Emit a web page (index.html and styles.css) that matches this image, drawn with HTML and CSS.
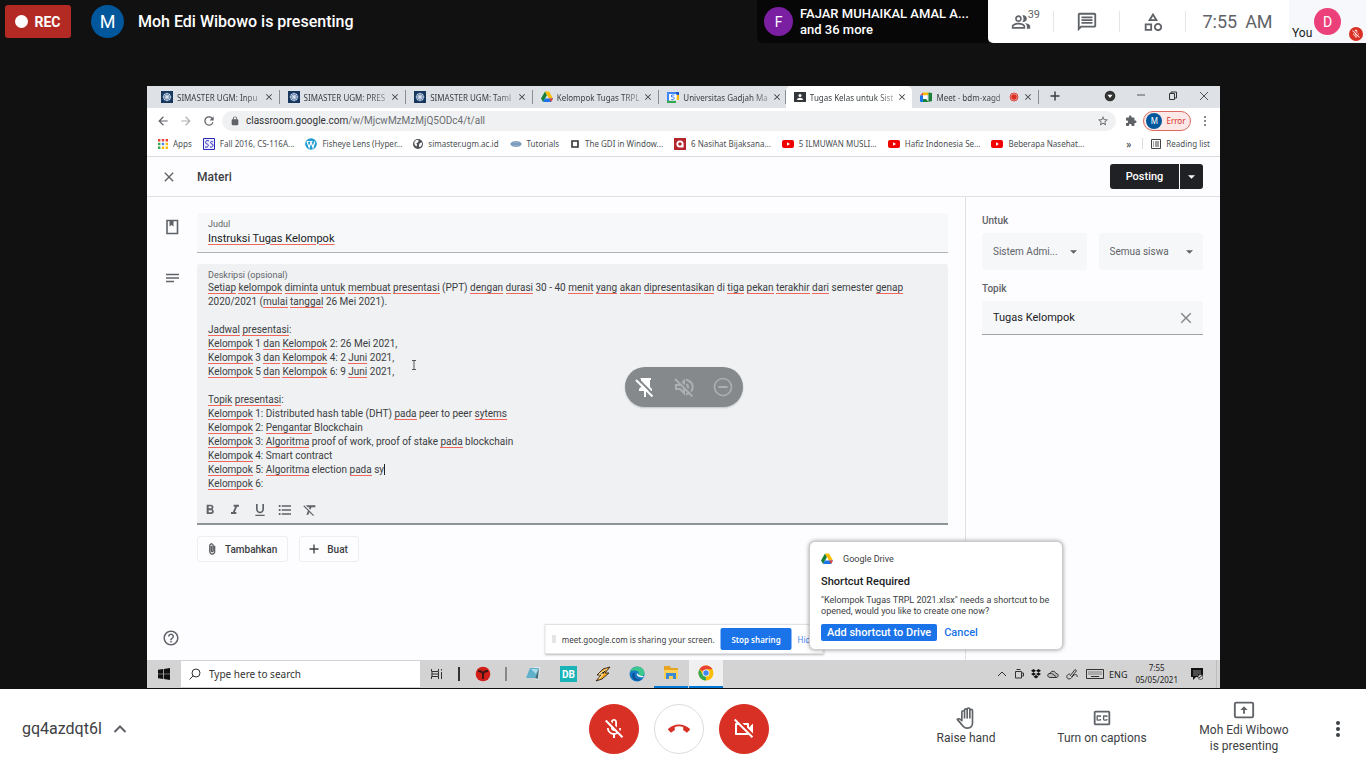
FILE: index.html
```html
<!DOCTYPE html>
<html lang="en">
<head>
<meta charset="utf-8">
<meta name="viewport" content="width=device-width, initial-scale=1">
<title>Meet</title>
<link rel="stylesheet" href="styles.css">
</head>
<body>
<svg class="sprite" aria-hidden="true">
  <symbol id="close" viewBox="0 0 24 24"><path d="M19 6.41L17.59 5 12 10.59 6.41 5 5 6.41 10.59 12 5 17.59 6.41 19 12 13.41 17.59 19 19 17.59 13.41 12z"/></symbol>
  <symbol id="micoff" viewBox="0 0 24 24"><path d="M10.8 4.9c0-.66.54-1.2 1.2-1.2s1.2.54 1.2 1.2l-.01 3.91L15 10.6V5c0-1.66-1.34-3-3-3-1.54 0-2.79 1.16-2.96 2.65l1.76 1.76V4.9zM19 11h-1.7c0 .58-.1 1.13-.27 1.64l1.27 1.27c.44-.88.7-1.87.7-2.91zM4.41 2.86L3 4.27l6 6V11c0 1.66 1.34 3 3 3 .23 0 .44-.03.65-.08l1.66 1.66c-.71.33-1.5.52-2.31.52-2.76 0-5.3-2.1-5.3-5.1H5c0 3.41 2.72 6.23 6 6.72V21h2v-3.28c.91-.13 1.77-.45 2.55-.9l4.2 4.2 1.41-1.41L4.41 2.86z"/></symbol>
  <symbol id="drive" viewBox="0 0 24 22"><path fill="#188038" d="M8 0 0 14l4 7L12 7z"/><path fill="#fbbc04" d="M8 0h8l8 14h-8z"/><path fill="#1a73e8" d="M4 21h16l4-7H8z"/><path fill="#ea4335" d="m20 21 4-7h-8z"/></symbol>
  <symbol id="ugm" viewBox="0 0 12 12"><path fill="#17375e" d="M0 0h12v12H0z"/><circle cx="6" cy="6" r="4" fill="#8fa8c8"/><circle cx="6" cy="6" r="2.6" fill="none" stroke="#34547f" stroke-width=".7"/><path stroke="#e4ebf4" stroke-width=".7" d="M6 1.6v8.8M1.6 6h8.8M3 3l6 6M9 3 3 9"/></symbol>
  <symbol id="tube" viewBox="0 0 12 10"><rect y="1" width="12" height="8" rx="2" fill="#f00000"/><path fill="#fff" d="m5 3.2 3 1.8-3 1.8z"/></symbol>
  <symbol id="caret" viewBox="0 0 8 4"><path d="M0 0h8L4 4z"/></symbol>
</svg>

<header class="topbar">
  <div class="rec"><i class="rec-dot"></i>REC</div>
  <span class="avatar avatar-m">M</span>
  <h1 class="presenter">Moh Edi Wibowo is presenting</h1>
  <div class="speaker">
    <span class="avatar avatar-f">F</span>
    <p>FAJAR MUHAIKAL AMAL A...<br>and 36 more</p>
  </div>
  <div class="meeting-tools">
    <button class="tool" aria-label="People"><svg class="i20" viewBox="0 0 24 24"><path d="M16.67 13.13C18.04 14.06 19 15.32 19 17v3h4v-3c0-2.18-3.57-3.47-6.33-3.87zM15 12c2.21 0 4-1.79 4-4s-1.79-4-4-4c-.47 0-.91.1-1.33.24C14.5 5.27 15 6.58 15 8s-.5 2.73-1.33 3.76c.42.14.86.24 1.33.24zM9 12c2.21 0 4-1.79 4-4s-1.79-4-4-4-4 1.79-4 4 1.79 4 4 4zm0-6c1.1 0 2 .9 2 2s-.9 2-2 2-2-.9-2-2 .9-2 2-2zm0 7c-2.67 0-8 1.34-8 4v3h16v-3c0-2.66-5.33-4-8-4zm6 5H3v-.99C3.2 16.29 6.3 15 9 15s5.8 1.29 6 2v1z"/></svg><span class="count">39</span></button>
    <button class="tool" aria-label="Chat"><svg class="i22" viewBox="0 0 24 24"><path d="M4 4h16v12H5.17L4 17.17V4m0-2c-1.1 0-1.99.9-1.99 2L2 22l4-4h14c1.1 0 2-.9 2-2V4c0-1.1-.9-2-2-2H4zm2 10h12v2H6v-2zm0-3h12v2H6V9zm0-3h12v2H6V6z"/></svg></button>
    <button class="tool" aria-label="Activities"><svg class="i22" viewBox="0 0 24 24"><path d="M12 2l-5.5 9h11L12 2zm0 3.84L13.93 9h-3.87L12 5.84zM17.5 13c-2.49 0-4.5 2.01-4.5 4.5s2.01 4.5 4.5 4.5 4.5-2.01 4.5-4.5-2.01-4.5-4.5-4.5zm0 7c-1.38 0-2.5-1.12-2.5-2.5s1.12-2.5 2.5-2.5 2.5 1.12 2.5 2.5-1.12 2.5-2.5 2.5zM3 21.5h8v-8H3v8zm2-6h4v4H5v-4z"/></svg></button>
    <div class="clock"><span>7:55</span><span>AM</span></div>
    <div class="you"><span class="you-label">You</span><span class="avatar avatar-d">D</span><span class="muted"><svg viewBox="0 0 24 24"><use href="#micoff"/></svg></span></div>
  </div>
</header>

<main class="stage">
  <section class="screen" aria-label="Shared screen">
    <div class="tabstrip">
      <div class="tabs">
        <div class="tab"><svg class="i12"><use href="#ugm"/></svg><span>SIMASTER UGM: Inpu</span><button aria-label="Close tab"><svg class="i10"><use href="#close"/></svg></button></div>
        <div class="tab"><svg class="i12"><use href="#ugm"/></svg><span>SIMASTER UGM: PRES</span><button aria-label="Close tab"><svg class="i10"><use href="#close"/></svg></button></div>
        <div class="tab"><svg class="i12"><use href="#ugm"/></svg><span>SIMASTER UGM: Taml</span><button aria-label="Close tab"><svg class="i10"><use href="#close"/></svg></button></div>
        <div class="tab"><svg class="i12"><use href="#drive"/></svg><span>Kelompok Tugas TRPL</span><button aria-label="Close tab"><svg class="i10"><use href="#close"/></svg></button></div>
        <div class="tab"><svg class="i12" viewBox="0 0 12 12"><path fill="#4285f4" d="M0 1h9v2H2v7H0z"/><path fill="#1a56c4" d="M9 1h3v3H9z"/><path fill="#fbbc04" d="M9.500 4H12v5H9.500z"/><path fill="#34a853" d="M0 9.500h9V12H0z"/><path fill="#fff" d="M2 3h7.500v6.500H2z"/><path fill="none" stroke="#4285f4" d="M7.500 4h-3v2h1.800c1.600.200 1.400 2.500-.100 2.500H4.200"/></svg><span>Universitas Gadjah Ma</span><button aria-label="Close tab"><svg class="i10"><use href="#close"/></svg></button></div>
        <div class="tab active"><svg class="i12" viewBox="0 0 12 12"><path fill="#33373b" d="M0 1h12v10H0z"/><circle cx="6" cy="4.500" r="1.500" fill="#fff"/><path fill="#fff" d="M3 9c0-3 6-3 6 0z"/></svg><span>Tugas Kelas untuk Sist</span><button aria-label="Close tab"><svg class="i10"><use href="#close"/></svg></button></div>
        <div class="tab"><svg class="i12" viewBox="0 0 12 12"><path fill="#ea4335" d="M0 4.500 3 1.500v3z"/><path fill="#fbbc04" d="M3 1.500h5.500V4L3 4.500z"/><path fill="#1a73e8" d="M0 4.500h3V11H1a1 1 0 0 1-1-1z"/><path fill="#188038" d="M3 8h3l2.500 3H3zM8.500 1.500v9.500l3.500-1V2z"/><path fill="#fff" d="M3 4.500h4V8H3z"/></svg><span>Meet - bdm-xagd</span><svg class="i10" viewBox="0 0 10 10"><circle cx="5" cy="5" r="4" fill="#e8b4ae" stroke="#dd4b3e"/><circle cx="5" cy="5" r="2.800" fill="#d93025"/></svg><button aria-label="Close tab"><svg class="i10"><use href="#close"/></svg></button></div>
      </div>
      <div class="window-tools">
        <svg class="i12 plus" viewBox="0 0 12 12"><path d="M6 1.500v9M1.500 6h9" fill="none" stroke="#3c4043" stroke-width="1.500"/></svg>
        <svg class="i12" viewBox="0 0 12 12"><circle cx="6" cy="6" r="5.300"/><path fill="#fff" d="M3.500 4.700h5L6 8z"/></svg>
        <svg class="i12" viewBox="0 0 12 12"><path d="M2 5h8" fill="none" stroke="#555"/></svg>
        <svg class="i12" viewBox="0 0 12 12"><path d="M2.500 3.500h5v6h-5zM4 3.500V2h5.500v6h-2" fill="none" stroke="#333"/></svg>
        <svg class="i12" viewBox="0 0 12 12"><path d="m2 2 8 8M10 2l-8 8" fill="none" stroke="#555"/></svg>
      </div>
    </div>

    <div class="addressbar">
      <button aria-label="Back"><svg class="i14" viewBox="0 0 24 24"><path d="M20 11H7.830l5.590-5.590L12 4l-8 8 8 8 1.410-1.410L7.830 13H20v-2z"/></svg></button>
      <button aria-label="Forward" class="faint"><svg class="i14" viewBox="0 0 24 24"><path d="M4 11h12.170l-5.590-5.590L12 4l8 8-8 8-1.410-1.410L16.170 13H4z"/></svg></button>
      <button aria-label="Reload"><svg class="i14" viewBox="0 0 24 24"><path d="M17.65 6.35C16.2 4.9 14.21 4 12 4c-4.42 0-7.99 3.58-7.99 8s3.57 8 7.99 8c3.73 0 6.84-2.55 7.73-6h-2.080c-.82 2.33-3.040 4-5.650 4-3.310 0-6-2.690-6-6s2.690-6 6-6c1.660 0 3.140.690 4.220 1.780L13 11h7V4l-2.350 2.350z"/></svg></button>
      <div class="url"><svg class="i10" viewBox="0 0 24 24"><path d="M18 8h-1V6c0-2.760-2.240-5-5-5S7 3.240 7 6v2H6c-1.100 0-2 .9-2 2v10c0 1.100.9 2 2 2h12c1.100 0 2-.9 2-2V10c0-1.100-.9-2-2-2zM9 6c0-1.660 1.340-3 3-3s3 1.340 3 3v2H9z"/></svg><span><b>classroom.google.com</b>/w/MjcwMzMzMjQ5ODc4/t/all</span>
        <svg class="i12 star" viewBox="0 0 24 24"><path d="M22 9.240l-7.190-.620L12 2 9.190 8.630 2 9.240l5.460 4.730L5.820 21 12 17.270 18.180 21l-1.630-7.030L22 9.240zM12 15.400l-3.760 2.270 1-4.280-3.320-2.880 4.380-.380L12 6.100l1.710 4.040 4.380.380-3.320 2.880 1 4.280L12 15.400z"/></svg></div>
      <svg class="i12" viewBox="0 0 24 24"><path d="M20.500 11H19V7c0-1.100-.9-2-2-2h-4V3.500C13 2.120 11.880 1 10.500 1S8 2.120 8 3.500V5H4c-1.100 0-1.990.9-1.990 2v3.800H3.500c1.490 0 2.700 1.210 2.700 2.700s-1.210 2.700-2.700 2.700H2V20c0 1.100.9 2 2 2h3.800v-1.500c0-1.490 1.210-2.700 2.700-2.700 1.490 0 2.700 1.210 2.700 2.700V22H17c1.100 0 2-.9 2-2v-4h1.500c1.380 0 2.500-1.120 2.500-2.500S21.880 11 20.500 11z"/></svg>
      <button class="profile"><span class="avatar avatar-s">M</span>Error</button>
      <svg class="i12" viewBox="0 0 12 12"><circle cx="6" cy="2" r="1"/><circle cx="6" cy="6" r="1"/><circle cx="6" cy="10" r="1"/></svg>
    </div>

    <nav class="bookmarks">
      <a href="#"><svg class="i10" viewBox="0 0 10 10"><path fill="#ea4335" d="M0 0h2.400v2.400H0zM3.800 0h2.400v2.400H3.800zM7.600 0H10v2.400H7.600z"/><path fill="#34a853" d="M0 3.800h2.400v2.400H0zM0 7.600h2.400V10H0z"/><path fill="#4285f4" d="M3.800 3.800h2.400v2.400H3.800z"/><path fill="#fbbc04" d="M7.600 3.800H10v2.400H7.600zM3.800 7.600h2.400V10H3.800zM7.600 7.600H10V10H7.600z"/></svg>Apps</a>
      <a href="#"><svg class="i12" viewBox="0 0 12 12"><path fill="#eef" stroke="#2a2ab8" d="M.5.5h11v11H.5z"/><path fill="none" stroke="#2a2ab8" d="M6 3C2 1 2 6 4 6s2 4-2 3M10 4c-3-2-3 2-1 2s1 4-2 3"/></svg>Fall 2016, CS-116A...</a>
      <a href="#"><svg class="i12" viewBox="0 0 12 12"><circle cx="6" cy="6" r="5.800" fill="#1e9bd4"/><path fill="none" stroke="#fff" stroke-width="1.200" d="m2 3.500 2.200 6L6 4l2 5.500 1.800-6M1.800 3.500h2.800M5 3.500h2.500"/></svg>Fisheye Lens (Hyper...</a>
      <a href="#"><svg class="i10" viewBox="0 0 12 12"><circle cx="6" cy="6" r="6" fill="#4d5156"/><path fill="#fff" d="M2 3c2-2 4-2 5-1L6 4 4 5l1 2-1 2C2 8 1 5 2 3zM8 5l3-1c0 3-1 5-3 6L7 8z"/></svg>simaster.ugm.ac.id</a>
      <a href="#"><svg class="i12" viewBox="0 0 12 12"><ellipse cx="6" cy="6" rx="5" ry="2.200" fill="#b9cbdc" stroke="#5580a8"/><path d="M2 6h8" stroke="#3c6e9f"/></svg>Tutorials</a>
      <a href="#"><svg class="i10" viewBox="0 0 10 10"><path fill="none" stroke="#333" stroke-width="1.600" d="M2 2h6v6H2z"/></svg>The GDI in Window...</a>
      <a href="#"><svg class="i12" viewBox="0 0 12 12"><path fill="#b3262d" d="M0 0h12v12H0z"/><circle cx="6" cy="6" r="2.700" fill="none" stroke="#fff" stroke-width="1.800"/><path fill="#fff" d="M7 7h2.500v2.500H7z"/></svg>6 Nasihat Bijaksana...</a>
      <a href="#"><svg class="i12"><use href="#tube"/></svg>5 ILMUWAN MUSLI...</a>
      <a href="#"><svg class="i12"><use href="#tube"/></svg>Hafiz Indonesia Se...</a>
      <a href="#"><svg class="i12"><use href="#tube"/></svg>Beberapa Nasehat...</a>
      <span class="more">»</span>
      <a href="#" class="reading"><svg class="i10" viewBox="0 0 10 10"><path fill="none" stroke="#444" d="M.5.5h9v9h-9zM2 3h1M4 3h4M2 5h1M4 5h4M2 7h1M4 7h4"/></svg>Reading list</a>
    </nav>

    <div class="class-head">
      <button aria-label="Close"><svg class="i16"><use href="#close"/></svg></button>
      <h2>Materi</h2>
      <div class="split"><button>Posting</button><button aria-label="More options"><svg class="caret-s"><use href="#caret"/></svg></button></div>
    </div>

    <div class="class-body">
      <div class="editor">
        <svg class="i18 side-icon" viewBox="0 0 18 18"><path fill="none" stroke="#5f6368" stroke-width="1.600" d="M4 2.500h10.500v13H4z"/><path d="M6.500 2.500h4v6l-2-1.500-2 1.500z"/></svg>
        <div class="field title-field">
          <label for="judul">Judul</label>
          <input id="judul" type="text" value="Instruksi Tugas Kelompok">
        </div>
        <svg class="i18 side-icon" viewBox="0 0 18 18"><path fill="none" stroke="#5f6368" stroke-width="1.400" d="M3 5.500h13M3 9h13M3 12.500h8"/></svg>
        <div class="field desc-field">
          <span class="field-label" id="desk">Deskripsi (opsional)</span>
          <div class="rich" contenteditable="true" spellcheck="false" role="textbox" aria-multiline="true" aria-labelledby="desk"><u>Setiap</u> <u>kelompok</u> <u>diminta</u> <u>untuk</u> <u>membuat</u> <u>presentasi</u> (PPT) <u>dengan</u> <u>durasi</u> 30 - 40 <u>menit</u> <u>yang</u> <u>akan</u> <u>dipresentasikan</u> di <u>tiga</u> <u>pekan</u> <u>terakhir</u> <u>dari</u> semester <u>genap</u><br>2020/2021 (<u>mulai</u> <u>tanggal</u> 26 Mei 2021).<br><br><u>Jadwal</u> <u>presentasi</u>:<br><u>Kelompok</u> 1 <u>dan</u> <u>Kelompok</u> 2: 26 Mei 2021,<br><u>Kelompok</u> 3 <u>dan</u> <u>Kelompok</u> 4: 2 <u>Juni</u> 2021,<br><u>Kelompok</u> 5 <u>dan</u> <u>Kelompok</u> 6: 9 <u>Juni</u> 2021,<br><br><u>Topik</u> <u>presentasi</u>:<br><u>Kelompok</u> 1: Distributed hash table (DHT) <u>pada</u> peer to peer <u>sytems</u><br><u>Kelompok</u> 2: <u>Pengantar</u> Blockchain<br><u>Kelompok</u> 3: <u>Algoritma</u> proof of work, proof of stake <u>pada</u> blockchain<br><u>Kelompok</u> 4: Smart contract<br><u>Kelompok</u> 5: <u>Algoritma</u> election <u>pada</u> <span class="typing">sy</span><br><u>Kelompok</u> 6:</div>
          <div class="format">
            <button aria-label="Bold"><svg class="i16" viewBox="0 0 24 24"><path d="M15.600 10.790c.970-.670 1.650-1.770 1.650-2.790 0-2.260-1.750-4-4-4H7v14h7.040c2.090 0 3.710-1.700 3.710-3.790 0-1.520-.860-2.820-2.150-3.420zM10 6.500h3c.830 0 1.500.670 1.500 1.500s-.670 1.500-1.500 1.500h-3v-3zm3.500 9H10v-3h3.500c.830 0 1.500.670 1.500 1.500s-.670 1.500-1.500 1.500z"/></svg></button>
            <button aria-label="Italic"><svg class="i16" viewBox="0 0 24 24"><path d="M10 4v3h2.210l-3.420 8H6v3h8v-3h-2.210l3.420-8H18V4z"/></svg></button>
            <button aria-label="Underline"><svg class="i16" viewBox="0 0 24 24"><path d="M12 17c3.310 0 6-2.690 6-6V3h-2.500v8c0 1.930-1.570 3.500-3.500 3.500S8.500 12.930 8.500 11V3H6v8c0 3.310 2.690 6 6 6zm-7 2v2h14v-2H5z"/></svg></button>
            <button aria-label="Bulleted list"><svg class="i16" viewBox="0 0 24 24"><path d="M4 10.500c-.830 0-1.500.670-1.500 1.500s.670 1.500 1.500 1.500 1.500-.670 1.500-1.500-.670-1.500-1.500-1.500zm0-6c-.830 0-1.500.670-1.500 1.500S3.170 7.500 4 7.500 5.500 6.830 5.500 6 4.830 4.500 4 4.500zm0 12c-.830 0-1.500.680-1.500 1.500s.680 1.500 1.500 1.500 1.500-.680 1.500-1.500-.670-1.500-1.500-1.500zM7 19h14v-2H7v2zm0-6h14v-2H7v2zm0-8v2h14V5H7z"/></svg></button>
            <button aria-label="Remove formatting"><svg class="i16" viewBox="0 0 24 24"><path d="M3.270 5L2 6.270l6.970 6.970L6.500 19h3l1.570-3.660L16.730 21 18 19.730 3.550 5.270 3.270 5zM6 5v.180L8.820 8h2.400l-.720 1.680 2.100 2.100L14.210 8H20V5H6z"/></svg></button>
          </div>
          <svg class="ibeam" viewBox="0 0 6 10"><path fill="none" stroke="#555" d="M1 .5h4M1 9.500h4M3 1v8"/></svg>
        </div>
        <div class="attach">
          <button><svg class="i12" viewBox="0 0 24 24"><path d="M16.500 6v11.500c0 2.210-1.790 4-4 4s-4-1.790-4-4V5c0-1.380 1.120-2.500 2.500-2.500s2.500 1.120 2.500 2.500v10.500c0 .550-.450 1-1 1s-1-.450-1-1V6H10v9.500c0 1.380 1.120 2.500 2.500 2.500s2.500-1.120 2.500-2.500V5c0-2.210-1.790-4-4-4S7 2.790 7 5v12.500c0 3.040 2.460 5.500 5.500 5.500s5.500-2.460 5.500-5.500V6h-1.500z" stroke="#3c4043"/></svg>Tambahkan</button>
          <button><svg class="i12" viewBox="0 0 12 12"><path d="M6 1.500v9M1.500 6h9" stroke="#3c4043" stroke-width="1.300"/></svg>Buat</button>
        </div>
        <button class="help" aria-label="Help"><svg class="i18" viewBox="0 0 24 24"><path d="M11 18h2v-2h-2v2zm1-16C6.480 2 2 6.480 2 12s4.480 10 10 10 10-4.480 10-10S17.520 2 12 2zm0 18c-4.410 0-8-3.590-8-8s3.590-8 8-8 8 3.590 8 8-3.590 8-8 8zm0-14c-2.210 0-4 1.790-4 4h2c0-1.100.9-2 2-2s2 .9 2 2c0 2-3 1.750-3 5h2c0-2.250 3-2.500 3-5 0-2.210-1.790-4-4-4z"/></svg></button>
      </div>
      <aside class="side">
        <label for="kelas">Untuk</label>
        <div class="selects">
          <div class="select"><select id="kelas"><option>Sistem Admi...</option></select><svg><use href="#caret"/></svg></div>
          <div class="select"><select aria-label="Siswa"><option>Semua siswa</option></select><svg><use href="#caret"/></svg></div>
        </div>
        <label for="topik">Topik</label>
        <div class="topic"><input id="topik" type="text" value="Tugas Kelompok"><button aria-label="Clear topic"><svg class="i18"><use href="#close"/></svg></button></div>
      </aside>
    </div>

    <footer class="taskbar">
      <button class="start" aria-label="Start"><svg class="i12" viewBox="0 0 12 12"><path d="M0 1.700 5.200 1v4.700H0zM5.900.9 12 0v5.700H5.900zM0 6.300h5.200V11L0 10.300zM5.900 6.300H12V12l-6.100-.9z"/></svg></button>
      <label class="search"><svg class="i12" viewBox="0 0 12 12"><circle cx="7" cy="5" r="4" fill="none" stroke="#333"/><path stroke="#333" d="M4.200 7.800.5 11.500"/></svg><input type="text" placeholder="Type here to search" aria-label="Search"></label>
      <div class="apps">
        <span><svg class="i12" viewBox="0 0 12 12"><path fill="none" stroke="#333" d="M.5 1v2.500h7V1M1 4v4.500M7.500 4v4.500M.5 11V8.500h7V11M.5 6h7M10.500 4v7M10.500 1v1.500"/></svg></span>
        <i class="bar"></i>
        <span><svg class="i16" viewBox="0 0 16 16"><circle cx="8" cy="8" r="7.300" fill="#d21e19"/><path fill="none" stroke="#3e1514" stroke-width="2" d="M3 5q5 0 5 3.500V13M13 5q-5 0-5 3.500"/></svg></span>
        <i class="bar soft"></i>
        <span><svg class="i16" viewBox="0 0 16 16"><path fill="#e6eff2" d="m5 2 10-1-1 12-3 1z"/><path fill="#5fb0cb" d="M5 2h9l-4 10H1z"/><path fill="#a9dae8" d="M6 3h7l-2 5z"/><path fill="#476e7b" d="m14 2-4 10 3 1z"/></svg></span>
        <span class="db">DB</span>
        <span><svg class="i16" viewBox="0 0 16 16"><path fill="#f7a823" stroke="#403327" d="M15 1 8 3 2 9h4l-5 6 6-2 7-6h-4z"/><path stroke="#fff1b6" d="m12 3-8 5h4l-4 5"/></svg></span>
        <span><svg class="i16" viewBox="0 0 16 16"><circle cx="8" cy="8" r="7.500" fill="#1377c5"/><path fill="#3bc78d" d="M1 6C3-1 15-1 15.500 7c0 3-4 4-6 2.500C12 5 5 3 1 6z"/><path fill="#0b4f91" d="M6 7c-2 4 2 8 7 6-5 4-12 0-9-6z"/><path fill="#eef7f9" d="M8 7c-1 2 1 5 6 4l1-1c-2 0-5 0-5.500-1.500z"/></svg></span>
        <span class="open"><svg class="i16" viewBox="0 0 16 16"><path fill="#e5a520" d="M1 1h6l1 2h7v11H1z"/><path fill="#ffd257" d="M1 5h14v9H1z"/><path fill="#3a8bd4" d="M3 8h10v6h-3v-3H6v3H3z"/></svg></span>
        <span class="open current"><svg class="i16" viewBox="0 0 16 16"><circle cx="8" cy="8" r="7.500" fill="#fbbc04"/><path fill="#ea4335" d="M8 8 1.500 4.200a7.500 7.500 0 0 1 13 .1H8z"/><path fill="#34a853" d="m8 8 0 7.500A7.500 7.500 0 0 1 1.500 4.200L5 10l3 2z"/><circle cx="8" cy="8" r="3.500" fill="#fff"/><circle cx="8" cy="8" r="2.700" fill="#4285f4"/></svg></span>
      </div>
      <div class="tray">
        <svg class="i12" viewBox="0 0 12 12"><path fill="none" stroke="#333" d="m2 8 4-4 4 4"/></svg>
        <svg class="i12" viewBox="0 0 12 12"><path fill="none" stroke="#333" d="M2.500 3.500h6v6.500h-6zM8.500 5h2v3h-2M3.500 1.500h4"/></svg>
        <svg class="i12" viewBox="0 0 12 12"><path d="m3.500 1 2.500 1.700-2.500 1.700L1 2.700zM8.500 1 11 2.700 8.500 4.400 6 2.700zM3.500 4.400 6 6.100 3.500 7.800 1 6.100zM8.500 4.400 11 6.100 8.500 7.800 6 6.100zM6 7l2.500 1.700L6 10.400 3.500 8.700z"/></svg>
        <svg class="i12" viewBox="0 0 12 12"><path fill="#bbb" stroke="#333" d="M3 9.500C-.5 9 .5 5 3 5.500c1-3 5-3 6 0 3 0 3 4 0 4z"/><path fill="none" stroke="#333" d="M3 5.500c2-.5 3 1 6 3"/></svg>
        <svg class="i12 pen" viewBox="0 0 12 12"><path fill="none" stroke="#333" d="M4 8 9 1.500l1.500 1.200L5.500 9M4 6C0 6 0 11 3 11s3-3 5-4 4 0 3 2"/></svg>
        <svg class="keys" viewBox="0 0 18 10"><path fill="none" stroke="#333" d="M.5.5h17v9H.5z"/><path fill="none" stroke="#333" stroke-dasharray="1 1" d="M2.500 3h13M2.500 5h13"/><path stroke="#333" d="M5 7.500h8"/></svg>
        <span>ENG</span>
        <time>7:55<br>05/05/2021</time>
        <svg class="i12" viewBox="0 0 12 12"><path d="M0 0h12v9H5l-3 3V9H0z"/><path stroke="#bbb" stroke-width=".7" d="M2 3h8M2 5h8M2 7h5"/><circle cx="9.500" cy="9" r="2.500" fill="#d3d3d3" stroke="#333" stroke-width=".7"/><path stroke="#333" d="m8 10 3-2.500"/></svg>
      </div>
    </footer>

    <div class="sharing"><i class="grip"></i><span>meet.google.com is sharing your screen.</span><button class="stop">Stop sharing</button><button class="hide">Hide</button></div>

    <div class="drive-card" role="dialog" aria-labelledby="dt">
      <div class="drive-name"><svg class="i12"><use href="#drive"/></svg>Google Drive</div>
      <h3 id="dt">Shortcut Required</h3>
      <p>"Kelompok Tugas TRPL 2021.xlsx" needs a shortcut to be opened, would you like to create one now?</p>
      <div class="drive-actions"><button class="add">Add shortcut to Drive</button><button class="cancel">Cancel</button></div>
    </div>

    <div class="tile-tools">
      <button aria-label="Unpin"><svg class="i24" viewBox="0 0 24 24"><path fill="#fff" d="M7 3h11v2h-1v7l2 2v2h-6v6h-2v-6H6v-2l2-2V4z"/><path stroke="#85898b" stroke-width="2" d="m4.500 3.500 17 17"/><path stroke="#fff" stroke-width="2" d="m3 5 16.500 16.500"/></svg></button>
      <button aria-label="Mute"><svg class="i24" viewBox="0 0 24 24"><path fill="none" stroke="#adb0b2" stroke-width="2" d="M4 10v4h4l4 4V6L8 10zM14.500 9q3 3 0 6M14 4.500c9 3 9 12 0 15"/><path stroke="#85898b" stroke-width="2" d="m4.500 3.500 17 17"/><path stroke="#adb0b2" stroke-width="2" d="m3 4 17.500 17.500"/></svg></button>
      <button aria-label="Remove"><svg class="i24" viewBox="0 0 24 24"><circle cx="12" cy="12" r="8.500" fill="none" stroke="#adb0b2" stroke-width="1.600"/><path stroke="#adb0b2" stroke-width="2" d="M7.500 12h9"/></svg></button>
    </div>
  </section>
</main>

<footer class="callbar">
  <button class="code">gq4azdqt6l<svg class="i14" viewBox="0 0 14 14"><path fill="none" stroke="#5f6368" stroke-width="2" d="m1.500 10 5.500-5.500 5.500 5.500"/></svg></button>
  <div class="calls">
    <button class="round red" aria-label="Turn on microphone"><svg class="i24" viewBox="0 0 24 24"><use href="#micoff"/></svg></button>
    <button class="round" aria-label="Leave call"><svg class="i22" viewBox="0 0 24 24"><path fill="#d93025" d="M12 9c-1.600 0-3.150.250-4.600.720v3.100c0 .390-.230.740-.560.9-.980.490-1.870 1.120-2.660 1.850-.180.180-.430.280-.7.280-.280 0-.530-.110-.710-.290L.290 13.080c-.180-.170-.290-.420-.290-.7 0-.280.110-.530.290-.710C3.340 8.780 7.460 7 12 7s8.660 1.780 11.710 4.670c.180.180.290.430.290.710 0 .280-.110.530-.290.710l-2.480 2.480c-.180.180-.430.290-.710.290-.270 0-.520-.110-.7-.280-.790-.740-1.690-1.360-2.670-1.850-.330-.160-.560-.5-.560-.9v-3.100C15.150 9.250 13.600 9 12 9z"/></svg></button>
    <button class="round red" aria-label="Turn on camera"><svg class="i24" viewBox="0 0 24 24"><path d="M9.560 8l-2-2-4.150-4.140L2 3.270 4.730 6H4c-.550 0-1 .450-1 1v10c0 .550.450 1 1 1h12c.210 0 .390-.080.550-.180L19.730 21l1.410-1.410-8.860-8.860L9.560 8zM5 16V8h1.730l8 8H5zm10-8v2.610l6 6V6.500l-4 4V7c0-.550-.450-1-1-1h-5.610l2 2H15z"/></svg></button>
  </div>
  <div class="actions">
    <button class="action"><svg class="i22" viewBox="0 0 24 24"><path fill="none" stroke="#5f6368" stroke-width="1.800" stroke-linejoin="round" d="M7.500 15V5.500a1.400 1.400 0 0 1 2.900 0V12 3.500a1.400 1.400 0 0 1 2.900 0V12 2.500a1.400 1.400 0 0 1 2.900 0V12 4a1.400 1.400 0 0 1 2.900 0v13c0 4-2 6-5.500 6-3 0-4.500-1-6-3.500L2.500 13.500c1-1.300 2.500-.8 5 1.500z"/></svg>Raise hand</button>
    <button class="action"><svg class="i22" viewBox="0 0 24 24"><path d="M19 4H5c-1.110 0-2 .9-2 2v12c0 1.100.890 2 2 2h14c1.100 0 2-.9 2-2V6c0-1.100-.9-2-2-2zm0 14H5V6h14v12zM7 15h3c.550 0 1-.450 1-1v-1H9.500v.5h-2v-3h2v.5H11v-1c0-.550-.450-1-1-1H7c-.550 0-1 .450-1 1v4c0 .550.450 1 1 1zm7 0h3c.550 0 1-.450 1-1v-1h-1.500v.5h-2v-3h2v.5H18v-1c0-.550-.450-1-1-1h-3c-.550 0-1 .450-1 1v4c0 .550.450 1 1 1z"/></svg>Turn on captions</button>
    <button class="action wide"><svg class="i22" viewBox="0 0 24 24"><rect x="2" y="4" width="20" height="16" rx="1.500" fill="none" stroke="#5f6368" stroke-width="2"/><path d="m12 8 4 4h-3v4h-2v-4H8z"/></svg>Moh Edi Wibowo<br>is presenting</button>
    <button class="kebab" aria-label="More options"><svg class="i18" viewBox="0 0 18 18"><circle cx="9" cy="3" r="2"/><circle cx="9" cy="9" r="2"/><circle cx="9" cy="15" r="2"/></svg></button>
  </div>
</footer>
</body>
</html>
```
FILE: styles.css
```css
* { box-sizing: border-box; }
body { margin: 0; min-height: 100vh; display: flex; flex-direction: column; background: #111; color: #3c4043; font-family: Roboto, "Liberation Sans", sans-serif; }
h1, h2, h3, p { margin: 0; font-weight: 500; }
button { display: inline-flex; align-items: center; justify-content: center; border: 0; padding: 0; background: none; color: inherit; font: inherit; cursor: pointer; }
input, select { border: 0; padding: 0; min-width: 0; background: none; color: inherit; font: inherit; outline: 0; }
svg { display: block; flex: none; fill: #5f6368; }
.sprite { position: absolute; width: 0; height: 0; }
.i10 { width: 10px; height: 10px; }
.i12 { width: 12px; height: 12px; }
.i14 { width: 14px; height: 14px; }
.i16 { width: 16px; height: 16px; }
.i18 { width: 18px; height: 18px; }
.i20 { width: 20px; height: 20px; }
.i22 { width: 22px; height: 22px; }
.i24 { width: 24px; height: 24px; }

/* Meeting header */
.topbar { display: flex; align-items: center; height: 43px; padding-left: 5px; color: #fff; }
.rec { display: flex; align-items: center; justify-content: center; gap: 6px; width: 66px; height: 33px; border-radius: 3px; background: #b32a24; font-size: 14px; font-weight: 700; }
.rec-dot { width: 13px; height: 13px; border-radius: 50%; background: #fff; }
.avatar { display: flex; align-items: center; justify-content: center; flex: none; border-radius: 50%; color: #fff; }
.avatar-m { width: 33px; height: 33px; margin: 0 14px 0 20px; background: #01579b; font-size: 18px; }
.avatar-f { width: 29px; height: 29px; background: #7b1fa2; font-size: 14px; }
.avatar-d { width: 27px; height: 27px; background: #ec407a; font-size: 14px; }
.avatar-s { width: 16px; height: 16px; background: #01579b; font-size: 8px; }
.presenter { font-size: 16px; }
.speaker { display: flex; align-items: center; gap: 7px; width: 231px; height: 43px; margin-left: auto; padding-left: 7px; border-bottom-left-radius: 6px; background: #070707; font-size: 13px; line-height: 16px; }
.speaker p { white-space: nowrap; }
.meeting-tools { display: flex; align-items: center; height: 43px; border-bottom-left-radius: 5px; background: #fff; color: #5f6368; }
.tool { position: relative; width: 66px; height: 21px; border-right: 1px solid #e4e5e7; }
.count { position: absolute; top: -2px; right: 13px; font-size: 11px; line-height: 12px; }
.clock { display: flex; justify-content: center; gap: 8px; width: 103px; font-size: 18px; }
.you { position: relative; width: 77px; height: 43px; padding: 8px 0 0 25px; background: #f6f8fb; }
.you-label { position: absolute; left: 3px; bottom: 3px; color: #202124; font-size: 12px; line-height: 14px; }
.muted { position: absolute; right: 3px; bottom: 2px; width: 14px; height: 14px; padding: 2px; border-radius: 50%; background: #d93025; }
.muted svg { width: 10px; height: 10px; fill: #fff; }

/* Presented screen */
.stage { flex: 1; display: flex; padding: 43px 146px 1px 147px; }
.screen { position: relative; flex: 1; min-width: 0; display: flex; flex-direction: column; background: #fdfcff; }
.tabstrip { display: flex; height: 22px; padding-left: 6px; background: #dee1e6; font-family: "Noto Sans", sans-serif; font-size: 8px; }
.tabs { flex: 1; min-width: 0; display: grid; grid-template-columns: repeat(7, minmax(0, 1fr)); }
.tab { display: flex; align-items: center; gap: 4px; min-width: 0; padding: 0 6px 0 8px; position: relative; }
.tab::after { content: ""; position: absolute; right: 0; top: 4px; height: 14px; border-right: 1px solid #8a8d91; }
.tab span { flex: 1; white-space: nowrap; -webkit-mask-image: linear-gradient(to right, #000 80%, #0006); mask-image: linear-gradient(to right, #000 80%, #0006); }
.tab svg { fill: #3c4043; }
.tab.active { border-radius: 5px 5px 0 0; background: #fff; }
.tab.active::after { display: none; }
.window-tools { display: flex; align-items: center; justify-content: space-between; width: 181px; padding: 0 10px 2px 10px; }
.window-tools svg { fill: #333; }
.plus { margin-right: 23px; }
.addressbar { display: flex; align-items: center; gap: 8px; height: 25px; padding: 2px 9px 2px 8px; background: #fff; font-size: 10px; }
.faint { opacity: .5; }
.url { flex: 1; display: flex; align-items: center; gap: 6px; height: 20px; padding: 0 7px 0 8px; border-radius: 10px; background: #f0f1f3; color: #6a6e72; }
.url b { color: #303236; font-weight: 400; }
.addressbar button + .url { margin-left: -2px; }
.addressbar button { width: 15px; }
.star { margin-left: auto; }
.addressbar .profile { gap: 4px; width: 48px; height: 20px; padding-right: 2px; border: 1px solid #dc6a62; border-radius: 10px; background: #fce8e6; color: #d93025; font-family: "Noto Sans", sans-serif; font-size: 8px; }
.url + svg { margin: 0 -2px 0 1px; }
.bookmarks { display: flex; align-items: center; gap: 11px; height: 24px; padding: 0 10px 2px 11px; border-bottom: 1px solid #dadce0; background: #fff; font-family: "Noto Sans", sans-serif; font-size: 8px; }
.bookmarks a { display: flex; align-items: center; gap: 5px; white-space: nowrap; color: #4b4f53; text-decoration: none; }
.more { margin-left: auto; font-size: 10px; }
.bookmarks .reading { padding-left: 8px; border-left: 1px solid #dadce0; }

/* Classroom material form */
.class-head { display: flex; align-items: center; height: 40px; padding: 0 17px 0 14px; border-bottom: 1px solid #dfe1e4; }
.class-head h2 { margin-left: 20px; font-size: 12px; }
.split { display: flex; gap: 1px; margin-left: auto; color: #fff; font-size: 11px; font-weight: 500; }
.split button { width: 69px; height: 25px; border-radius: 3px 0 0 3px; background: #202124; }
.split button + button { width: 23px; border-radius: 0 3px 3px 0; }
.caret-s { width: 7px; height: 4px; fill: #fff; }
.class-body { flex: 1; display: grid; grid-template-columns: minmax(0, 1fr) 255px; }
.editor { display: grid; grid-template-columns: 50px minmax(0, 1fr); grid-template-rows: auto auto auto 1fr; row-gap: 11px; padding: 16px 17px 13px 0; }
.side-icon { margin: 5px 0 0 16px; }
.field { border-bottom: 1px solid #b0b3b6; border-radius: 3px 3px 0 0; background: #f6f8f9; padding: 5px 11px; font-size: 11px; }
.field label, .field-label { display: block; color: #5f6368; font-size: 9px; line-height: 12px; }
.title-field { height: 40px; }
.title-field input { display: block; width: 100%; height: 16px; color: #202124; font-size: 11px; text-decoration: underline solid #ee6a60 1px; text-underline-offset: 2px; }
.desc-field { position: relative; min-height: 261px; border-bottom: 2px solid #8f9498; background: #eff1f2; }
.rich { font-size: 10px; line-height: 14px; outline: 0; }
.rich u { border-bottom: 1px solid #f0655c; text-decoration: none; }
.typing { border-right: 1px solid #222; }
.format { display: flex; gap: 9px; margin: 11px 0 0 -6px; }
.format button { width: 16px; height: 16px; }
.ibeam { position: absolute; left: 214px; top: 96px; width: 6px; height: 10px; }
.attach { grid-column: 2; display: flex; gap: 11px; }
.attach button { gap: 7px; height: 26px; padding: 0 10px 0 8px; border: 1px solid #eceef0; border-radius: 3px; color: #3c4043; font-size: 10px; font-weight: 500; }
.help { align-self: end; width: 18px; margin-left: 15px; }
.side { display: flex; flex-direction: column; padding: 17px 17px 0 16px; border-left: 1px solid #dfe1e4; font-size: 11px; }
.side label { margin-bottom: 6px; color: #5f6368; font-size: 10px; font-weight: 500; line-height: 13px; }
.selects { display: grid; grid-template-columns: 1fr 1fr; gap: 12px; margin-bottom: 12px; }
.select { display: grid; align-items: center; height: 37px; border-radius: 3px; background: #f6f7f9; color: #5f6368; font-size: 10px; }
.select select, .select svg { grid-area: 1 / 1; }
.select select { appearance: none; height: 37px; padding: 0 20px 0 11px; }
.select svg { justify-self: end; width: 7px; height: 4px; margin-right: 10px; pointer-events: none; }
.topic { display: flex; height: 34px; padding: 0 8px 0 11px; border-bottom: 1px solid #a0a3a6; background: #f6f7f9; color: #202124; font-size: 11px; }
.topic input { flex: 1; }
.topic svg { fill: #85898c; }

/* Desktop taskbar */
.taskbar { display: flex; height: 28px; padding-right: 3px; background: #d3d3d3; color: #222; font-family: "Noto Sans", sans-serif; font-size: 10px; }
.taskbar svg { fill: #111; }
.start { width: 34px; }
.search { display: flex; align-items: center; gap: 8px; width: 239px; margin: 1px 0; padding-left: 8px; background: #fff; }
.search input { flex: 1; }
.search input::placeholder { color: #333; opacity: 1; }
.apps { display: flex; align-items: center; }
.apps span { display: flex; align-items: center; justify-content: center; width: 34px; height: 28px; }
.bar { width: 2px; height: 14px; margin: 0 4px; background: #333; }
.apps .bar + span { width: 37px; }
.apps .soft { margin-right: 7px; background: #888; }
.apps .db { width: 17px; height: 16px; margin: 0 9px; background: #18b3b6; color: #fff; font-family: Roboto, sans-serif; font-size: 10px; font-weight: 700; }
.apps .open { border-bottom: 2px solid #0078d7; }
.apps .current { background: #f0f0f0; margin-left: 1px; }
.tray { display: flex; align-items: center; gap: 5px; margin-left: auto; padding-right: 13px; border-right: 1px solid #bcbcbc; font-size: 9px; }
.tray .pen { margin-left: 2px; }
.tray time { margin: 0 8px 0 3px; text-align: center; font-size: 8px; line-height: 12px; }
.keys { width: 18px; height: 10px; margin: 0 0 0 3px; }

/* Cards over the presented screen */
.sharing { position: absolute; left: 50%; bottom: 34px; transform: translateX(-50%); display: flex; align-items: center; gap: 6px; width: 279px; height: 30px; padding: 0 7px; border: 1px solid #e2e2e4; background: #fff; box-shadow: 0 1px 2px #0004; font-family: "Noto Sans", sans-serif; font-size: 8px; white-space: nowrap; }
.grip { width: 4px; height: 8px; border: solid #ccc; border-width: 0 1px; }
.stop { width: 71px; height: 22px; flex: none; border-radius: 2px; background: #1a73e8; color: #fff; font-weight: 600; }
.hide { color: #4285f4; }
.drive-card { position: absolute; right: 157px; bottom: 38px; width: 254px; padding: 10px 11px 8px; border: 1px solid #ccc; border-radius: 6px; background: #fff; box-shadow: 0 0 4px #0006; }
.drive-name { display: flex; align-items: center; gap: 10px; height: 14px; font-size: 9px; }
.drive-card h3 { margin: 9px 0 6px; color: #202124; font-size: 11px; line-height: 14px; }
.drive-card p { font-size: 9px; font-weight: 400; line-height: 11px; }
.drive-actions { display: flex; gap: 7px; margin-top: 7px; font-size: 11px; font-weight: 500; }
.drive-actions button { height: 17px; border-radius: 2px; }
.drive-actions .add { padding: 0 6px; background: #1a73e8; color: #fff; }
.cancel { color: #1a73e8; }
.tile-tools { position: absolute; left: 50%; top: 50%; transform: translate(-50%, -50%); display: flex; align-items: center; justify-content: center; gap: 15px; width: 118px; height: 40px; border-radius: 20px; background: #85898b; box-shadow: 0 1px 2px #0003; }

/* Call controls */
.callbar { display: grid; grid-template-columns: 1fr auto 1fr; align-items: center; min-height: 79px; padding: 0 8px 0 0; background: #fff; }
.code { justify-self: start; gap: 11px; padding-left: 22px; font-size: 16px; }
.calls { display: flex; gap: 15px; }
.round { width: 50px; height: 50px; border: 1px solid #dadce0; border-radius: 50%; background: #fff; }
.red { border-color: #d93025; background: #d93025; }
.red svg { fill: #fff; }
.actions { display: flex; align-items: center; justify-content: flex-end; }
.action { flex-direction: column; gap: 1px; width: 136px; padding-bottom: 4px; font-size: 12px; line-height: 16px; }
.wide { width: 148px; }
.kebab { width: 40px; height: 40px; }
.kebab svg { fill: #3c4043; }
```
